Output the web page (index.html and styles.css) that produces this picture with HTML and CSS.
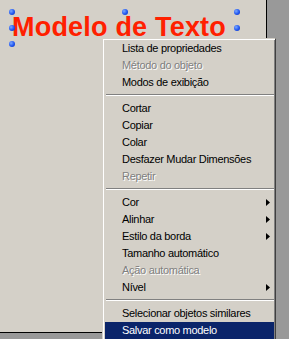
FILE: index.html
```
<!DOCTYPE html>
<html lang="pt">

<head>
    <meta charset="UTF-8">
    <meta name="viewport" content="width=device-width, initial-scale=1.0">
    <title>Modelo de Texto</title>
    <link rel="stylesheet" href="styles.css">
</head>

<body>

    <div class="workspace">
        <div class="page">
            <div class="text-object">
                <div class="text-title">Modelo de Texto</div>
                <span class="handle handle-tl"></span>
                <span class="handle handle-tc"></span>
                <span class="handle handle-tr"></span>
                <span class="handle handle-ml"></span>
                <span class="handle handle-mr"></span>
                <span class="handle handle-bl"></span>
                <span class="handle handle-bc"></span>
                <span class="handle handle-br"></span>
            </div>
        </div>

        <div class="context-menu">
            <div class="menu-item">Lista de propriedades</div>
            <div class="menu-item disabled">Método do objeto</div>
            <div class="menu-item">Modos de exibição</div>
            <div class="menu-separator"></div>
            <div class="menu-item">Cortar</div>
            <div class="menu-item">Copiar</div>
            <div class="menu-item">Colar</div>
            <div class="menu-item">Desfazer Mudar Dimensões</div>
            <div class="menu-item disabled">Repetir</div>
            <div class="menu-separator"></div>
            <div class="menu-item has-sub">Cor<svg class="sub-arrow" width="4" height="7" viewBox="0 0 4 7"><path d="M0 0L4 3.5L0 7Z" fill="#000"/></svg></div>
            <div class="menu-item has-sub">Alinhar<svg class="sub-arrow" width="4" height="7" viewBox="0 0 4 7"><path d="M0 0L4 3.5L0 7Z" fill="#000"/></svg></div>
            <div class="menu-item has-sub">Estilo da borda<svg class="sub-arrow" width="4" height="7" viewBox="0 0 4 7"><path d="M0 0L4 3.5L0 7Z" fill="#000"/></svg></div>
            <div class="menu-item">Tamanho automático</div>
            <div class="menu-item disabled">Ação automática</div>
            <div class="menu-item has-sub">Nível<svg class="sub-arrow" width="4" height="7" viewBox="0 0 4 7"><path d="M0 0L4 3.5L0 7Z" fill="#000"/></svg></div>
            <div class="menu-separator"></div>
            <div class="menu-item">Selecionar objetos similares</div>
            <div class="menu-item active">Salvar como modelo</div>
        </div>
    </div>

</body>

</html>
```

FILE: styles.css
```
:root {
    --color-face: #d4d0c8;
    --color-workspace: #999999;
    --color-shadow: #808080;
    --color-dark-shadow: #404040;
    --color-highlight: #0a246a;
    --color-title: #ff2000;
    --menu-font: "Liberation Sans", Arial, sans-serif;
}

html,
body {
    margin: 0;
    padding: 0;
}

body {
    background-color: var(--color-workspace);
    font-family: var(--menu-font);
}

.workspace {
    position: relative;
    height: 339px;
    overflow: hidden;
}

.page {
    position: relative;
    width: 266px;
    height: 332px;
    background-color: var(--color-face);
    border-right: 1px solid #000;
    border-bottom: 1px solid #000;
}

/* text object on the canvas, with its selection handles */
.text-object {
    position: absolute;
    left: 12px;
    top: 12px;
    width: 225px;
    height: 32px;
}

.text-title {
    padding-top: 2px;
    font-family: "Liberation Sans", Arial, sans-serif;
    font-weight: bold;
    font-size: 27px;
    line-height: 27px;
    letter-spacing: 0.2px;
    color: var(--color-title);
    white-space: nowrap;
}

.handle {
    position: absolute;
    width: 6px;
    height: 6px;
    margin: -3px 0 0 -3px;
    border-radius: 50%;
    background: radial-gradient(circle at 35% 35%, #7aa8ff 0%, #1f55f0 55%, #0b2fb0 100%);
}

.handle-tl { left: 0; top: 0; }
.handle-tc { left: 50%; top: 0; }
.handle-tr { left: 100%; top: 0; }
.handle-ml { left: 0; top: 50%; }
.handle-mr { left: 100%; top: 50%; }
.handle-bl { left: 0; top: 100%; }
.handle-bc { left: 50%; top: 100%; }
.handle-br { left: 100%; top: 100%; }

/* context menu */
.context-menu {
    position: absolute;
    left: 102px;
    top: 38px;
    width: 174px;
    box-sizing: border-box;
    padding: 1px 1px 1px 2px;
    background-color: var(--color-face);
    border: 1px solid;
    border-color: var(--color-face) var(--color-dark-shadow) var(--color-dark-shadow) var(--color-face);
    box-shadow: inset 1px 1px 0 #fff, inset -1px -1px 0 var(--color-shadow);
    font-size: 11px;
    letter-spacing: -0.3px;
    color: #000;
}

.menu-item {
    display: flex;
    align-items: center;
    justify-content: space-between;
    height: 17px;
    line-height: 17px;
    padding: 0 4px 0 17px;
    white-space: nowrap;
}

.menu-item.disabled {
    color: var(--color-shadow);
    text-shadow: 1px 1px 0 #fff;
}

.menu-item.active {
    background-color: var(--color-highlight);
    color: #fff;
}

.sub-arrow {
    display: block;
}

.menu-separator {
    height: 0;
    margin: 3px 0 4px 1px;
    border-top: 1px solid var(--color-shadow);
    border-bottom: 1px solid #fff;
}
```
